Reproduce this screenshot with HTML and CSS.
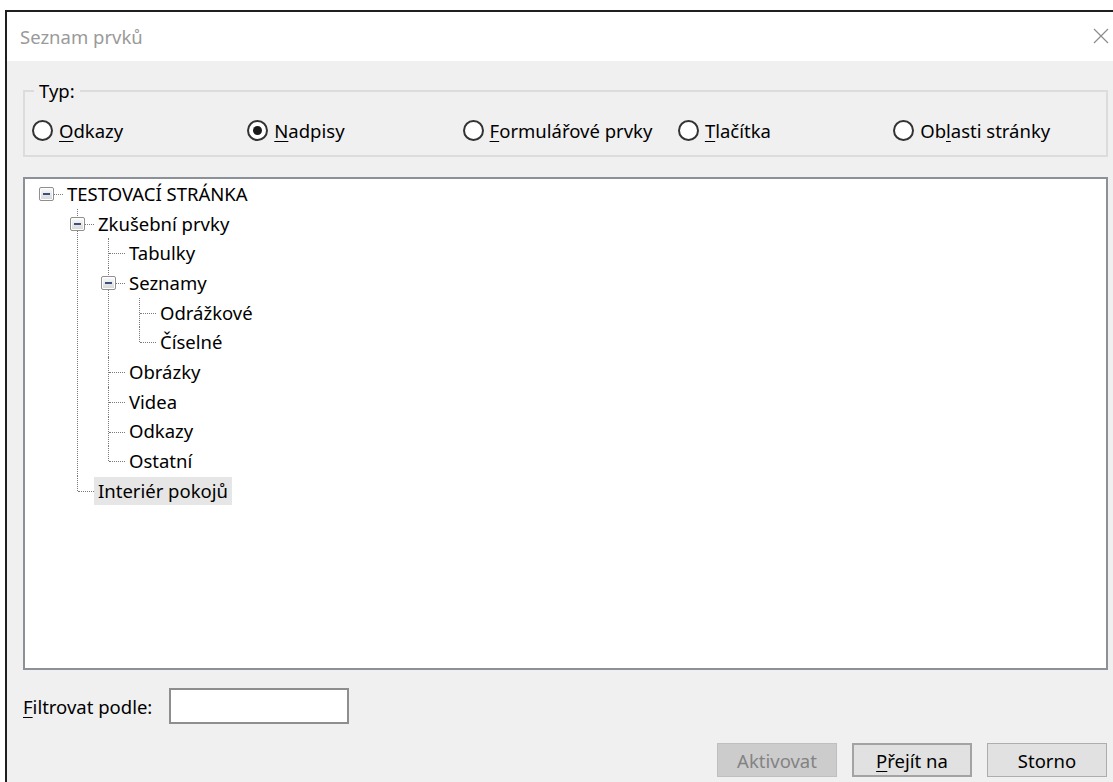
FILE: index.html
```html
<!DOCTYPE html>
<html lang="cs">
<head>
<meta charset="utf-8">
<title>Seznam prvků</title>
<link rel="stylesheet" href="styles.css">
</head>
<body>
<div class="window">
  <div class="titlebar">
    <span class="title">Seznam prvků</span>
    <svg class="close" viewBox="0 0 16 16" aria-label="Zavřít"><path d="M1 1 L15 15 M15 1 L1 15"/></svg>
  </div>
  <div class="content">
    <fieldset class="group">
      <legend>Typ:</legend>
      <div class="radios">
        <label class="radio"><span class="dot"></span><span><u>O</u>dkazy</span></label>
        <label class="radio checked"><span class="dot"></span><span><u>N</u>adpisy</span></label>
        <label class="radio"><span class="dot"></span><span><u>F</u>ormulářové prvky</span></label>
        <label class="radio"><span class="dot"></span><span><u>T</u>lačítka</span></label>
        <label class="radio"><span class="dot"></span><span>Ob<u>l</u>asti stránky</span></label>
      </div>
    </fieldset>

    <div class="tree">
      <ul class="level root-level">
        <li class="root">
          <div class="row"><span class="gutter"><span class="conn"></span><span class="exp"></span></span><span class="label">TESTOVACÍ STRÁNKA</span></div>
          <ul class="level">
            <li>
              <div class="row"><span class="gutter"><span class="conn"></span><span class="exp"></span></span><span class="label">Zkušební prvky</span></div>
              <ul class="level">
                <li><div class="row"><span class="gutter"><span class="conn"></span></span><span class="label">Tabulky</span></div></li>
                <li>
                  <div class="row"><span class="gutter"><span class="conn"></span><span class="exp"></span></span><span class="label">Seznamy</span></div>
                  <ul class="level">
                    <li><div class="row"><span class="gutter"><span class="conn"></span></span><span class="label">Odrážkové</span></div></li>
                    <li><div class="row"><span class="gutter"><span class="conn"></span></span><span class="label">Číselné</span></div></li>
                  </ul>
                </li>
                <li><div class="row"><span class="gutter"><span class="conn"></span></span><span class="label">Obrázky</span></div></li>
                <li><div class="row"><span class="gutter"><span class="conn"></span></span><span class="label">Videa</span></div></li>
                <li><div class="row"><span class="gutter"><span class="conn"></span></span><span class="label">Odkazy</span></div></li>
                <li><div class="row"><span class="gutter"><span class="conn"></span></span><span class="label">Ostatní</span></div></li>
              </ul>
            </li>
            <li><div class="row"><span class="gutter"><span class="conn"></span></span><span class="label selected">Interiér pokojů</span></div></li>
          </ul>
        </li>
      </ul>
    </div>

    <div class="filter">
      <label class="filter-label" for="filtr"><u>F</u>iltrovat podle:</label>
      <input id="filtr" class="filter-input" type="text">
    </div>

    <div class="buttons">
      <button class="btn" disabled>Aktivovat</button>
      <button class="btn default"><u>P</u>řejít na</button>
      <button class="btn">Storno</button>
    </div>
  </div>
</div>
</body>
</html>
```

FILE: styles.css
```css
html, body {
  margin: 0;
  height: 100%;
  overflow: hidden;
  background: #ffffff;
}

body {
  font-family: "Noto Sans", "Open Sans", sans-serif;
  font-size: 18.5px;
  color: #000;
}

u {
  text-decoration-thickness: 1px;
  text-underline-offset: 3px;
}

/* dialog frame */
.window {
  margin: 10px 0 0 5px;
  width: 1119px;
  height: 790px;
  box-sizing: border-box;
  border-left: 2px solid #1f1f1f;
  border-top: 2px solid #1f1f1f;
  background: #f0f0f0;
}

.titlebar {
  height: 49px;
  background: #ffffff;
  display: flex;
  align-items: center;
  justify-content: space-between;
  padding: 0 15px 0 13px;
}

.title {
  color: #9a9a9a;
}

.close {
  width: 16px;
  height: 16px;
  margin-top: -2px;
}

.close path {
  stroke: #8c8c8c;
  stroke-width: 1.2;
  fill: none;
}

.content {
  padding: 0 16px;
}

/* "Typ" group */
.group {
  margin: 18px 0 0;
  padding: 0 0 13px 7px;
  border: 2px solid #dcdcdc;
  min-inline-size: 0;
}

.group legend {
  margin-left: 2px;
  padding: 0 5px;
  line-height: 24px;
}

.radios {
  margin-top: 15px;
  display: grid;
  grid-template-columns: repeat(5, 215.3px);
  height: 24px;
  align-items: center;
}

.radio {
  display: flex;
  align-items: center;
  gap: 6px;
  white-space: nowrap;
}

.dot {
  width: 21px;
  height: 21px;
  box-sizing: border-box;
  border: 2px solid #333333;
  border-radius: 50%;
  background: #ffffff;
  display: flex;
  align-items: center;
  justify-content: center;
}

.radio.checked .dot::after {
  content: "";
  width: 9px;
  height: 9px;
  border-radius: 50%;
  background: #1a1a1a;
}

/* tree view */
.tree {
  margin-top: 20px;
  height: 493px;
  box-sizing: border-box;
  border: 2px solid #8c9098;
  background: #ffffff;
  overflow: hidden;
}

.level {
  list-style: none;
  margin: 0;
  padding: 0 0 0 31px;
}

.root-level {
  padding-left: 11px;
}

.level li {
  position: relative;
}

/* vertical sibling line */
.level .level > li::before {
  content: "";
  position: absolute;
  left: 10px;
  top: 0;
  bottom: 0;
  border-left: 1px dotted #7a7a7a;
}

.level .level > li:last-child::before {
  bottom: auto;
  height: 15px;
}

.row {
  display: flex;
  align-items: center;
  height: 29.7px;
}

.gutter {
  position: relative;
  flex: none;
  width: 27px;
  height: 100%;
}

.conn {
  position: absolute;
  left: 11px;
  width: 16px;
  top: 15px;
  border-top: 1px dotted #7a7a7a;
}

.exp {
  position: absolute;
  z-index: 1;
  left: 3px;
  top: 8px;
  width: 15px;
  height: 14px;
  box-sizing: border-box;
  border: 1px solid #8f8f8f;
  border-radius: 2px;
  background: linear-gradient(#fbfbfb, #d6d6d6);
  box-shadow: inset 0 0 0 1px #ffffff;
}

.exp::after {
  content: "";
  position: absolute;
  left: 3px;
  right: 3px;
  top: 5px;
  height: 2px;
  background: #3d4f7c;
}

.label {
  padding: 0 4px;
  line-height: 28px;
  white-space: nowrap;
}

.label.selected {
  background: #e6e6e6;
}

/* filter row */
.filter {
  margin-top: 18px;
  display: flex;
  align-items: center;
}

.filter-label {
  width: 146px;
}

.filter-input {
  width: 180px;
  height: 36px;
  box-sizing: border-box;
  margin: 0;
  border: 2px solid #8e8e8e;
  background: #ffffff;
  font: inherit;
}

/* dialog buttons */
.buttons {
  margin-top: 19px;
  display: flex;
  justify-content: flex-end;
  gap: 15px;
  padding-right: 1px;
}

.btn {
  width: 120px;
  height: 34px;
  box-sizing: border-box;
  margin: 0;
  padding: 0;
  font: inherit;
  color: #000;
  background: #e1e1e1;
  border: 1px solid #adadad;
}

.btn.default {
  border: 2px solid #a3a3a3;
}

.btn:disabled {
  background: #cccccc;
  border-color: #bfbfbf;
  color: #838383;
}
```
